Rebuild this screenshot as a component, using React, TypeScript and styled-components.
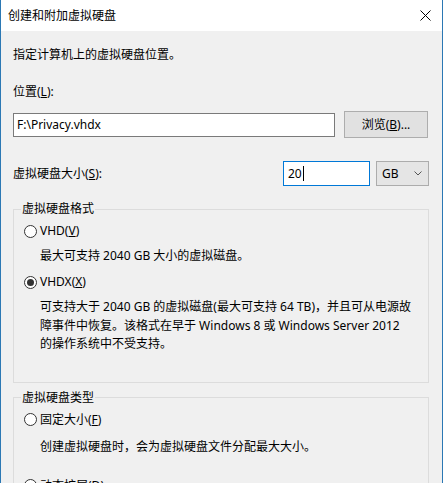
import React from 'react';
import styled, { createGlobalStyle } from 'styled-components';

const GlobalStyle = createGlobalStyle`
  html, body {
    margin: 0;
    padding: 0;
    background: #f0f0f0;
  }
  * {
    box-sizing: border-box;
  }
`;

const Window = styled.div`
  width: 443px;
  height: 483px;
  overflow: hidden;
  background: #f0f0f0;
  border-left: 1px solid #2b78b4;
  border-right: 1px solid #2b78b4;
  font-family: "Noto Sans", "Noto Sans CJK SC", sans-serif;
  font-size: 12px;
  line-height: 16px;
  color: #000;
`;

const TitleBar = styled.div`
  height: 31px;
  background: #fff;
  display: flex;
  align-items: center;
  justify-content: space-between;
  padding: 0 11px 0 7px;
`;

const TitleText = styled.span`
  font-size: 12px;
`;

const Body = styled.div`
  padding: 16px 13px 0 12px;
  display: flex;
  flex-direction: column;
`;

const Text = styled.div<{ $mt?: number; $indent?: number; $lh?: number }>`
  margin-top: ${({ $mt }) => $mt ?? 0}px;
  margin-left: ${({ $indent }) => $indent ?? 0}px;
  line-height: ${({ $lh }) => $lh ?? 16}px;
  white-space: nowrap;
`;

const Row = styled.div<{ $mt: number }>`
  display: flex;
  align-items: center;
  margin-top: ${({ $mt }) => $mt}px;
`;

const Label = styled.span`
  flex: 1;
`;

const TextBox = styled.div<{ $focused?: boolean; $width?: number }>`
  ${({ $width }) => ($width ? `width: ${$width}px;` : 'flex: 1;')}
  height: ${({ $focused }) => ($focused ? 25 : 24)}px;
  background: #fff;
  border: 1px solid ${({ $focused }) => ($focused ? '#0078d7' : '#7a7a7a')};
  display: flex;
  align-items: center;
  padding-left: ${({ $focused }) => ($focused ? 4 : 3)}px;
  white-space: nowrap;
`;

const Caret = styled.span`
  display: inline-block;
  width: 1px;
  height: 15px;
  background: #000;
  margin-left: 1px;
`;

const Button = styled.div`
  width: 84px;
  height: 27px;
  margin-left: 9px;
  margin-right: 1px;
  background: #e1e1e1;
  border: 1px solid #adadad;
  display: flex;
  align-items: center;
  justify-content: center;
`;

const Select = styled.div`
  width: 53px;
  height: 25px;
  margin-left: 6px;
  background: #e5e5e5;
  border: 1px solid #acacac;
  display: flex;
  align-items: center;
  justify-content: space-between;
  padding: 0 6px 0 5px;
`;

const Group = styled.fieldset<{ $mt: number; $pb: number }>`
  margin: ${({ $mt }) => $mt}px 0 0 0;
  padding: 0 10px ${({ $pb }) => $pb}px 7px;
  border: 1px solid #dcdcdc;
  min-width: 0;
`;

const Legend = styled.legend`
  padding: 0 1px;
  line-height: 16px;
`;

const RadioRow = styled.div<{ $mt: number }>`
  display: flex;
  align-items: center;
  margin-top: ${({ $mt }) => $mt}px;
  margin-left: 3px;
  height: 16px;
  white-space: nowrap;
`;

const RadioCircle = styled.span<{ $checked?: boolean }>`
  width: 13px;
  height: 13px;
  border-radius: 50%;
  border: 1px solid #333;
  background: #fff;
  margin-right: 3px;
  display: flex;
  align-items: center;
  justify-content: center;
  flex-shrink: 0;
  &::after {
    content: '';
    width: 7px;
    height: 7px;
    border-radius: 50%;
    background: ${({ $checked }) => ($checked ? '#333' : 'transparent')};
  }
`;

function Radio({ checked, children, mt }: { checked?: boolean; children: React.ReactNode; mt: number }) {
  return (
    <RadioRow $mt={mt}>
      <RadioCircle $checked={checked} />
      <span>{children}</span>
    </RadioRow>
  );
}

export default function App() {
  return (
    <>
      <GlobalStyle />
      <Window>
        <TitleBar>
          <TitleText>创建和附加虚拟硬盘</TitleText>
          <svg width="11" height="11" viewBox="0 0 11 11">
            <path d="M0.5 0.5 L10.5 10.5 M10.5 0.5 L0.5 10.5" stroke="#000" strokeWidth="1" />
          </svg>
        </TitleBar>
        <Body>
          <Text>指定计算机上的虚拟硬盘位置。</Text>
          <Text $mt={21}>
            位置(<u>L</u>):
          </Text>
          <Row $mt={11}>
            <TextBox>F:\Privacy.vhdx</TextBox>
            <Button>
              浏览(<u>B</u>)...
            </Button>
          </Row>
          <Row $mt={23}>
            <Label>
              虚拟硬盘大小(<u>S</u>):
            </Label>
            <TextBox $focused $width={87}>
              20
              <Caret />
            </TextBox>
            <Select>
              <span>GB</span>
              <svg width="8" height="5" viewBox="0 0 8 5">
                <path d="M0.5 0.5 L4 4 L7.5 0.5" stroke="#555" strokeWidth="1" fill="none" />
              </svg>
            </Select>
          </Row>
          <Group $mt={15} $pb={28}>
            <Legend>虚拟硬盘格式</Legend>
            <Radio mt={6}>
              VHD(<u>V</u>)
            </Radio>
            <Text $mt={9} $indent={19}>
              最大可支持 2040 GB 大小的虚拟磁盘。
            </Text>
            <Radio checked mt={10}>
              VHDX(<u>X</u>)
            </Radio>
            <Text $mt={8} $indent={19} $lh={18.5}>
              可支持大于 2040 GB 的虚拟磁盘(最大可支持 64 TB)，并且可从电源故
              <br />
              障事件中恢复。该格式在早于 Windows 8 或 Windows Server 2012
              <br />
              的操作系统中不受支持。
            </Text>
          </Group>
          <Group $mt={7} $pb={20}>
            <Legend>虚拟硬盘类型</Legend>
            <Radio mt={6}>
              固定大小(<u>F</u>)
            </Radio>
            <Text $mt={11} $indent={19}>
              创建虚拟硬盘时，会为虚拟硬盘文件分配最大大小。
            </Text>
            <Radio mt={23}>
              动态扩展(<u>D</u>)
            </Radio>
          </Group>
        </Body>
      </Window>
    </>
  );
}
